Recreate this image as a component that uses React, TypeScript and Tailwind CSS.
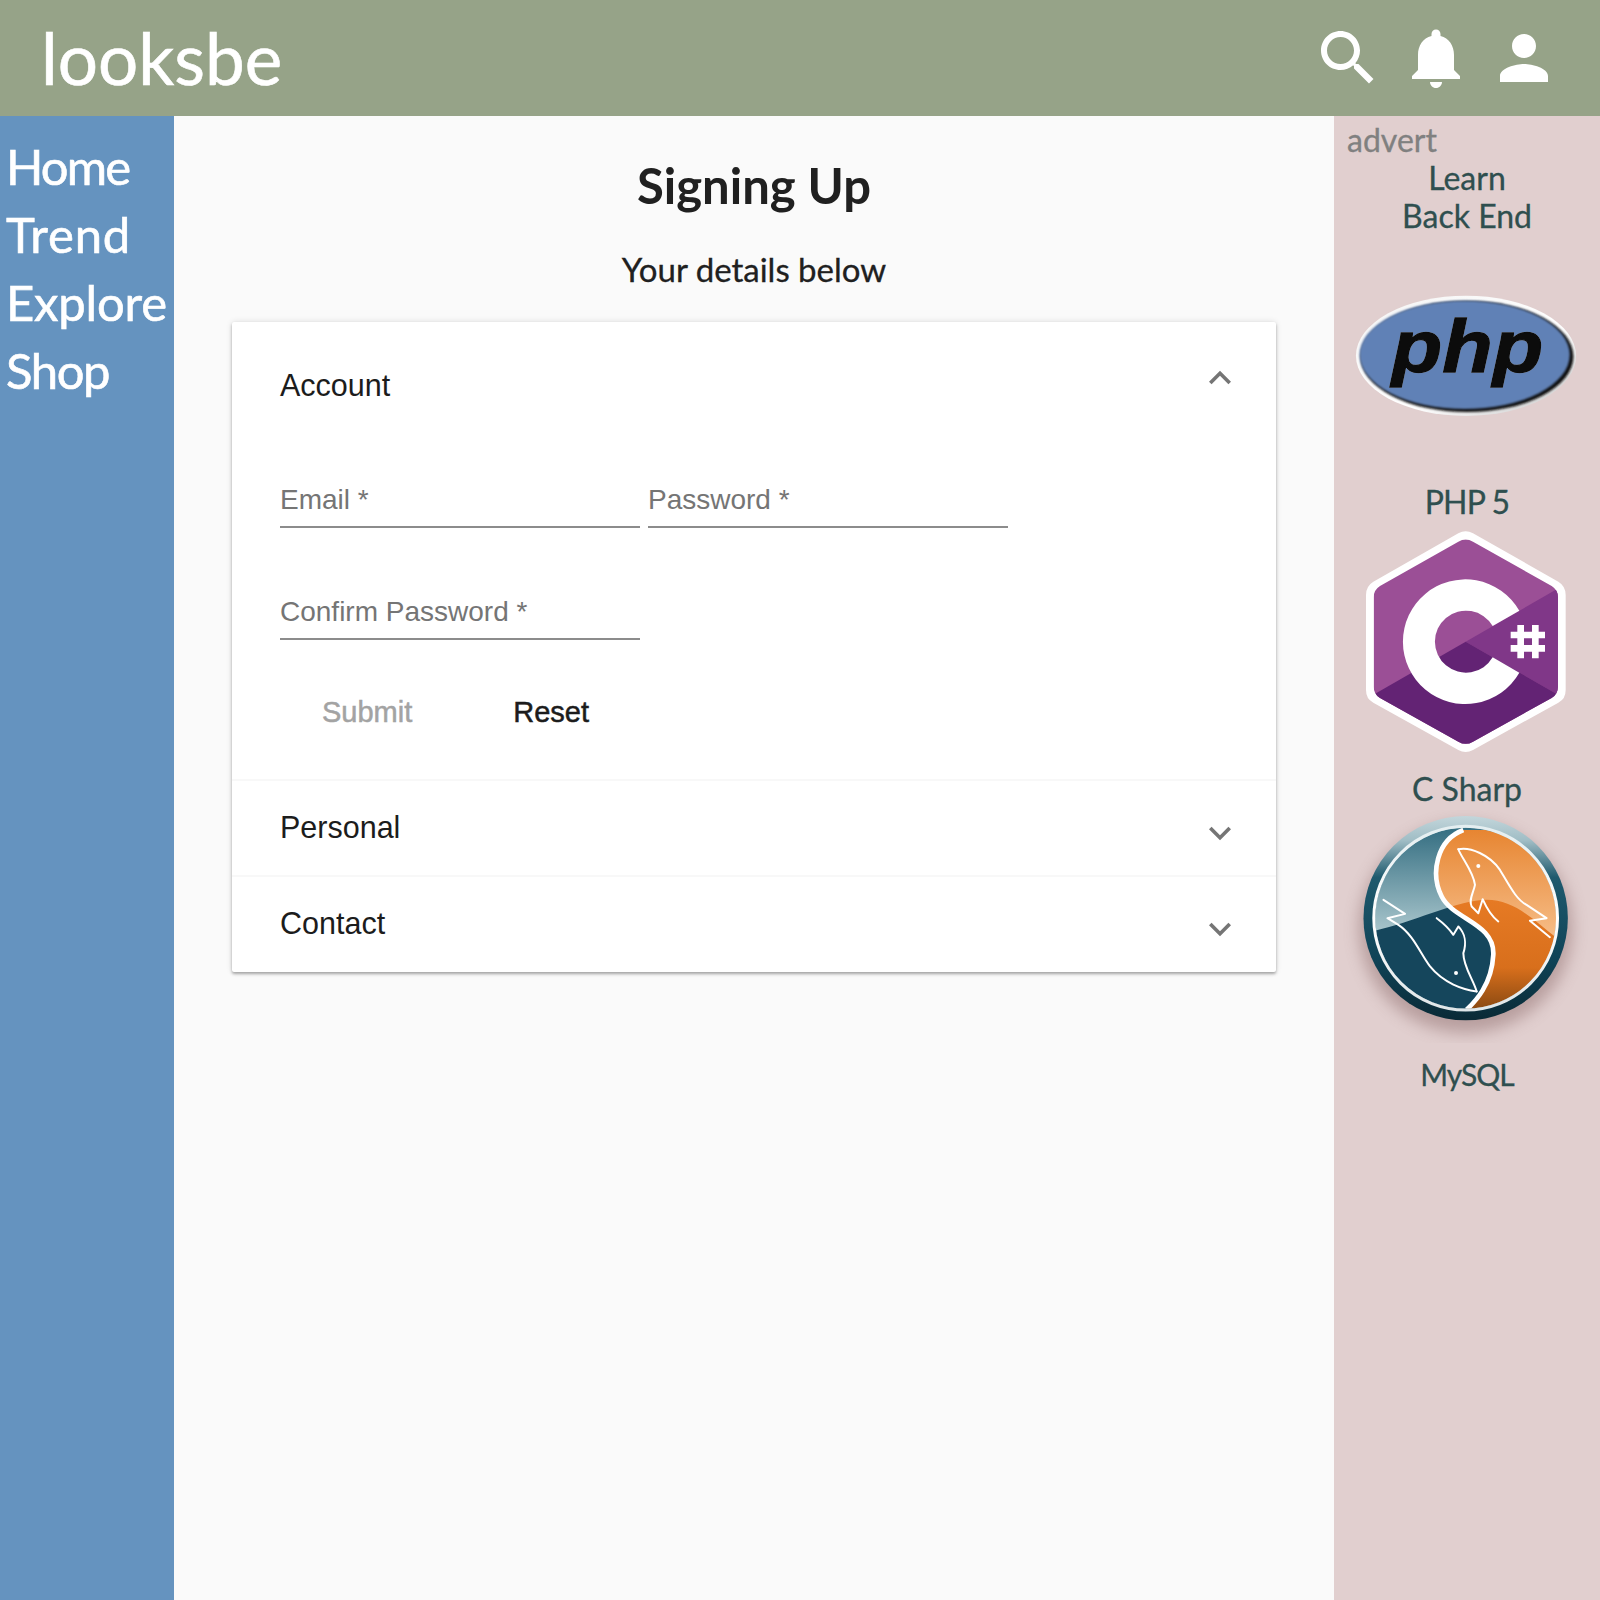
const body = "font-['Lato',sans-serif]";
const navItems = [
  { label: "Home", spacing: "tracking-[-1.8px]" },
  { label: "Trend", spacing: "tracking-[0.8px]" },
  { label: "Explore", spacing: "tracking-[-0.2px]" },
  { label: "Shop", spacing: "tracking-[-1.4px]" },
];

const Chevron = ({ up, className }: { up?: boolean; className?: string }) => (
  <svg width="44" height="44" viewBox="0 0 24 24" fill="#757575" className={className}>
    <path d={up ? "M12 8l-6 6 1.41 1.41L12 10.83l4.59 4.58L18 14z" : "M16.59 8.59L12 13.17 7.41 8.59 6 10l6 6 6-6z"} />
  </svg>
);

const HeaderIcon = ({ d }: { d: string }) => (
  <svg width="72" height="72" viewBox="0 0 24 24" fill="#fff">
    <path d={d} />
  </svg>
);

const PhpLogo = () => (
  <svg width="266" height="133" viewBox="162 870 798 400" className="block">
    <defs>
      <linearGradient id="phpRim" x1="0" y1="0" x2="1" y2="1">
        <stop offset="0" stopColor="#f4f4f4" />
        <stop offset="0.6" stopColor="#ffffff" />
        <stop offset="1" stopColor="#c4c4c4" />
      </linearGradient>
      <filter id="phpSoft">
        <feGaussianBlur stdDeviation="2.5" />
      </filter>
    </defs>
    <ellipse cx="558" cy="1068" rx="331" ry="181" fill="url(#phpRim)" />
    <ellipse cx="561" cy="1070" rx="320" ry="167" fill="#0d0d0d" filter="url(#phpSoft)" />
    <ellipse cx="554" cy="1065" rx="316" ry="163" fill="#6181b6" filter="url(#phpSoft)" />
    <text
      x="335"
      y="1118"
      fontFamily="'Liberation Sans', sans-serif"
      fontWeight="700"
      fontStyle="italic"
      fontSize="225"
      textLength="455"
      lengthAdjust="spacingAndGlyphs"
      fill="#0c0c0c"
      stroke="#0c0c0c"
      strokeWidth="4"
      className="drop-shadow-[0_0_1px_#d4def2]"
    >
      php
    </text>
  </svg>
);

const CSharpLogo = () => (
  <svg width="266" height="230" viewBox="12 81 798 690" className="block">
    <defs>
      <clipPath id="hexClip">
        <path d="M385 125Q407 112 429 125L665 258Q684 270 684 292L684 560Q684 582 665 594L429 725Q407 738 385 725L150 594Q131 582 131 560L131 292Q131 270 150 258Z" />
      </clipPath>
    </defs>
    <path
      d="M385 100Q407 88 429 100L685 245Q707 258 707 285L707 570Q707 597 685 608L429 750Q407 762 385 750L130 608Q108 597 108 570L108 285Q108 258 130 245Z"
      fill="#fff"
    />
    <g clipPath="url(#hexClip)">
      <rect x="100" y="90" width="620" height="670" fill="#9b4f96" />
      <path d="M407 425L720 245L720 605Z" fill="#803788" />
      <path d="M407 425L720 605L720 760L100 760L100 602Z" fill="#632374" />
    </g>
    <path d="M568 332A187 187 0 1 0 568 518L488 472A93 93 0 1 1 488 378Z" fill="#fff" />
    <path d="M572 375V475M616 375V475M542 405H645M542 445H645" stroke="#fff" strokeWidth="20" />
  </svg>
);

const waveLower = "M120 425C220 410 380 330 470 330C560 330 620 400 700 460L700 700L120 700Z";

const MySqlLogo = () => (
  <svg width="266" height="233" viewBox="12 60 798 700" className="block">
    <defs>
      <filter id="mysqlBlur" x="-20%" y="-20%" width="140%" height="140%">
        <feGaussianBlur stdDeviation="24" />
      </filter>
      <linearGradient id="rimGrad" x1="0" y1="0" x2="0" y2="1">
        <stop offset="0" stopColor="#c3d6db" />
        <stop offset="0.12" stopColor="#a0bdc5" />
        <stop offset="0.3" stopColor="#1f5a6e" />
        <stop offset="0.7" stopColor="#0f4357" />
        <stop offset="1" stopColor="#0a2a36" />
      </linearGradient>
      <linearGradient id="ringGrad" x1="0" y1="0" x2="0" y2="1">
        <stop offset="0" stopColor="#e4eef0" />
        <stop offset="0.5" stopColor="#ffffff" />
        <stop offset="1" stopColor="#dfe6e8" />
      </linearGradient>
      <linearGradient id="tealTop" x1="0" y1="0" x2="0" y2="1">
        <stop offset="0" stopColor="#2f6a7e" />
        <stop offset="0.55" stopColor="#a4c2c9" />
      </linearGradient>
      <linearGradient id="orangeTop" x1="0" y1="0" x2="0" y2="1">
        <stop offset="0" stopColor="#e6822c" />
        <stop offset="0.6" stopColor="#f6bd88" />
      </linearGradient>
      <linearGradient id="orangeLow" x1="0" y1="0" x2="0" y2="1">
        <stop offset="0" stopColor="#e67a24" />
        <stop offset="0.55" stopColor="#d86f1c" />
        <stop offset="0.95" stopColor="#7d4310" />
      </linearGradient>
      <clipPath id="innerCircle">
        <circle cx="407" cy="385" r="272" />
      </clipPath>
      <clipPath id="orangeClip">
        <path d="M400 120C320 150 300 250 335 320C370 390 495 400 490 495C485 590 430 640 410 660L700 660L700 120Z" />
      </clipPath>
    </defs>
    <ellipse cx="407" cy="415" rx="320" ry="315" fill="#7a5555" opacity="0.4" filter="url(#mysqlBlur)" />
    <circle cx="407" cy="385" r="307" fill="url(#rimGrad)" />
    <g clipPath="url(#innerCircle)">
      <rect x="120" y="100" width="600" height="570" fill="url(#tealTop)" />
      <path d={waveLower} fill="#15465c" />
      <g clipPath="url(#orangeClip)">
        <rect x="120" y="100" width="600" height="570" fill="url(#orangeTop)" />
        <path d={waveLower} fill="url(#orangeLow)" />
      </g>
      <path
        d="M400 120C320 150 300 250 335 320C370 390 495 400 490 495C485 590 430 640 410 660"
        fill="none"
        stroke="#fff"
        strokeWidth="14"
      />
    </g>
    <circle cx="407" cy="385" r="276" fill="none" stroke="url(#ringGrad)" strokeWidth="9" />
    <g fill="none" stroke="#fff" strokeWidth="6" strokeLinejoin="round" strokeLinecap="round">
      <path d="M385 178C420 170 480 195 510 240C540 290 560 330 590 345L650 385L600 393L660 442" />
      <path d="M385 178C395 205 430 245 435 285C430 310 415 330 425 350L445 370L458 328C470 355 485 380 505 395" />
      <path d="M440 605C400 600 340 580 300 530C270 490 250 435 205 405L172 385L225 372L160 330" />
      <path d="M440 605C430 570 400 530 400 490C410 460 405 430 385 410L370 435C360 420 340 400 320 385" />
    </g>
    <circle cx="445" cy="228" r="6" fill="#fff" />
    <circle cx="378" cy="550" r="6" fill="#fff" />
  </svg>
);

const Field = ({ label }: { label: string }) => (
  <div className="flex h-[80px] w-[360px] items-end border-b-2 border-[#8c8c8c] pb-[9px]">
    <span className="text-[28px] leading-[34px] text-[#757575]">{label}</span>
  </div>
);

const AccordionRow = ({ title, height }: { title: string; height: string }) => (
  <div className={`flex items-start justify-between border-t-2 border-[#f8f8f8] pl-12 pr-[34px] ${height}`}>
    <span className="mt-[28px] text-[30.5px] leading-[36px] text-[#1c1c1c]">{title}</span>
    <Chevron className="mt-[30px]" />
  </div>
);

export default function App() {
  return (
    <div className={`flex min-h-[1600px] flex-col ${body}`}>
      <header className="flex h-[116px] items-center justify-between bg-[#96a388] pl-[41px] pr-10">
        <span className="mb-[2px] text-[71px] leading-none text-white [-webkit-text-stroke:0.6px]">looksbe</span>
        <div className="flex gap-4">
          <HeaderIcon d="M15.5 14h-.79l-.28-.27C15.41 12.59 16 11.11 16 9.5 16 5.91 13.09 3 9.5 3S3 5.91 3 9.5 5.91 16 9.5 16c1.61 0 3.09-.59 4.23-1.57l.27.28v.79l5 4.99L20.49 19l-4.99-5zm-6 0C7.01 14 5 11.99 5 9.5S7.01 5 9.5 5 14 7.01 14 9.5 11.99 14 9.5 14z" />
          <HeaderIcon d="M12 22c1.1 0 2-.9 2-2h-4c0 1.1.89 2 2 2zm6-6v-5c0-3.07-1.64-5.64-4.5-6.32V4c0-.83-.67-1.5-1.5-1.5s-1.5.67-1.5 1.5v.68C7.63 5.36 6 7.92 6 11v5l-2 2v1h16v-1l-2-2z" />
          <HeaderIcon d="M12 12c2.21 0 4-1.79 4-4s-1.79-4-4-4-4 1.79-4 4 1.79 4 4 4zm0 2c-2.67 0-8 1.34-8 4v2h16v-2c0-2.66-5.33-4-8-4z" />
        </div>
      </header>

      <div className="flex flex-1">
        <nav className="w-[174px] shrink-0 bg-[#6593bf] pl-[6px] pt-[16px]">
          {navItems.map((item) => (
            <div key={item.label} className={`h-[68px] text-[49px] leading-[68px] text-white [-webkit-text-stroke:0.6px] ${item.spacing}`}>
              {item.label}
            </div>
          ))}
        </nav>

        <main className="flex-1 bg-[#fafafa] px-[58px]">
          <h1 className="pt-[35px] text-center text-[49px] leading-[68px] font-bold text-[#202020]">Signing Up</h1>
          <p className="mt-[28px] text-center text-[33px] leading-[44px] text-[#202020] [-webkit-text-stroke:0.3px]">Your details below</p>

          <section className="mt-[31px] rounded-[2px] bg-white shadow-[0_2px_3px_rgba(0,0,0,0.3),0_0_6px_rgba(0,0,0,0.12)] font-['Liberation_Sans',sans-serif]">
            <div className="h-[457px] pl-12 pr-[34px]">
              <div className="flex h-[126px] items-center justify-between">
                <span className="text-[30.5px] leading-[36px] text-[#1c1c1c]">Account</span>
                <Chevron up className="mb-[14px]" />
              </div>
              <div className="flex gap-2">
                <Field label="Email *" />
                <Field label="Password *" />
              </div>
              <div className="mt-8">
                <Field label="Confirm Password *" />
              </div>
              <div className="mt-[55px] flex text-[29px] leading-[34px] [-webkit-text-stroke:0.5px]">
                <button type="button" className="ml-[42px] text-[#a3a3a3]">Submit</button>
                <button type="button" className="ml-[101px] text-[#1c1c1c]">Reset</button>
              </div>
            </div>
            <AccordionRow title="Personal" height="h-[96px]" />
            <AccordionRow title="Contact" height="h-[97px]" />
          </section>
        </main>

        <aside className="w-[266px] shrink-0 bg-[#e1cfcf] pt-[5px] text-[32px] leading-[37px] text-[#2f4f4f] [-webkit-text-stroke:0.3px]">
          <div className="pl-[13px] text-[#808080]">advert</div>
          <div className="mt-[1px] text-center">Learn</div>
          <div className="mt-[1px] text-center">Back End</div>
          <div className="mt-[56px]"><PhpLogo /></div>
          <div className="mt-[60px] text-center tracking-[-0.8px]">PHP 5</div>
          <div className="mt-[7px]"><CSharpLogo /></div>
          <div className="mt-[13px] text-center">C Sharp</div>
          <div className="mt-[3px]"><MySqlLogo /></div>
          <div className="mt-[13px] text-center text-[30px] tracking-[-1px]">MySQL</div>
        </aside>
      </div>
    </div>
  );
}
